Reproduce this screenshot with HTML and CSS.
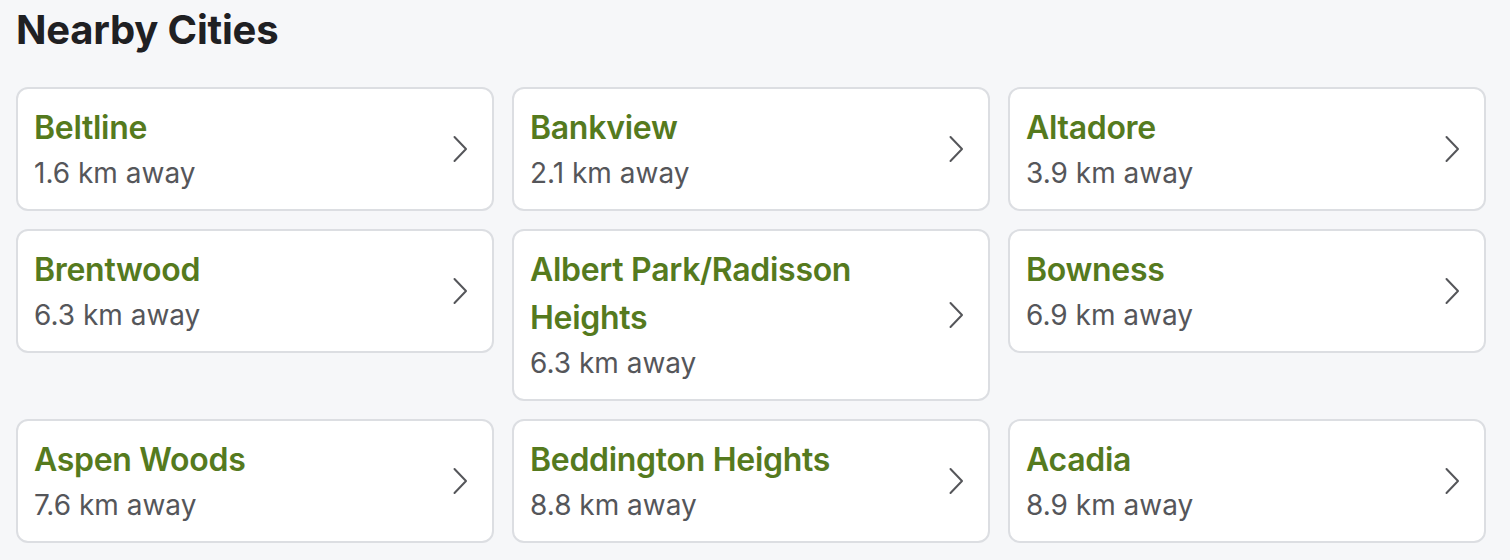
FILE: index.html
```html
<!DOCTYPE html>
<html lang="en">
<head>
<meta charset="utf-8">
<title>Nearby Cities</title>
<link rel="stylesheet" href="styles.css">
</head>
<body>
<section class="nearby">
  <h2 class="nearby-title">Nearby Cities</h2>
  <div class="city-grid">
    <a class="city-card" href="#"><div class="city-info"><div class="city-name">Beltline</div><div class="city-dist">1.6 km away</div></div><svg class="chev" viewBox="0 0 16 28" width="16" height="28"><path d="M2.5 2 L14 14 L2.5 26"/></svg></a>
    <a class="city-card" href="#"><div class="city-info"><div class="city-name">Bankview</div><div class="city-dist">2.1 km away</div></div><svg class="chev" viewBox="0 0 16 28" width="16" height="28"><path d="M2.5 2 L14 14 L2.5 26"/></svg></a>
    <a class="city-card" href="#"><div class="city-info"><div class="city-name">Altadore</div><div class="city-dist">3.9 km away</div></div><svg class="chev" viewBox="0 0 16 28" width="16" height="28"><path d="M2.5 2 L14 14 L2.5 26"/></svg></a>
    <a class="city-card" href="#"><div class="city-info"><div class="city-name">Brentwood</div><div class="city-dist">6.3 km away</div></div><svg class="chev" viewBox="0 0 16 28" width="16" height="28"><path d="M2.5 2 L14 14 L2.5 26"/></svg></a>
    <a class="city-card" href="#"><div class="city-info"><div class="city-name">Albert Park/Radisson Heights</div><div class="city-dist">6.3 km away</div></div><svg class="chev" viewBox="0 0 16 28" width="16" height="28"><path d="M2.5 2 L14 14 L2.5 26"/></svg></a>
    <a class="city-card" href="#"><div class="city-info"><div class="city-name">Bowness</div><div class="city-dist">6.9 km away</div></div><svg class="chev" viewBox="0 0 16 28" width="16" height="28"><path d="M2.5 2 L14 14 L2.5 26"/></svg></a>
    <a class="city-card" href="#"><div class="city-info"><div class="city-name">Aspen Woods</div><div class="city-dist">7.6 km away</div></div><svg class="chev" viewBox="0 0 16 28" width="16" height="28"><path d="M2.5 2 L14 14 L2.5 26"/></svg></a>
    <a class="city-card" href="#"><div class="city-info"><div class="city-name">Beddington Heights</div><div class="city-dist">8.8 km away</div></div><svg class="chev" viewBox="0 0 16 28" width="16" height="28"><path d="M2.5 2 L14 14 L2.5 26"/></svg></a>
    <a class="city-card" href="#"><div class="city-info"><div class="city-name">Acadia</div><div class="city-dist">8.9 km away</div></div><svg class="chev" viewBox="0 0 16 28" width="16" height="28"><path d="M2.5 2 L14 14 L2.5 26"/></svg></a>
  </div>
</section>
</body>
</html>
```

FILE: styles.css
```css
html, body {
  margin: 0;
  padding: 0;
  background: #f6f7f9;
}
body {
  font-family: Inter, "Noto Sans", "Liberation Sans", sans-serif;
}
.nearby {
  padding: 6px 16px 16px 16px;
}
.nearby-title {
  margin: 0 0 33px 0;
  font-size: 40px;
  line-height: 48px;
  font-weight: 700;
  color: #1f2023;
  letter-spacing: -0.2px;
}
.city-grid {
  display: grid;
  grid-template-columns: repeat(3, 478px);
  gap: 18px;
  align-items: start;
}
.city-card {
  display: flex;
  align-items: center;
  justify-content: space-between;
  gap: 16px;
  background: #ffffff;
  border: 2px solid #dcdee2;
  border-radius: 12px;
  padding: 15px 24px 15px 16px;
  text-decoration: none;
}
.city-info {
  display: flex;
  flex-direction: column;
  min-width: 0;
}
.city-name {
  font-size: 32px;
  line-height: 48px;
  font-weight: 600;
  letter-spacing: -0.3px;
  color: #557a1e;
}
.city-dist {
  font-size: 28px;
  line-height: 42px;
  font-weight: 400;
  color: #55565a;
}
.chev {
  flex: none;
}
.chev path {
  fill: none;
  stroke: #55565a;
  stroke-width: 2;
  stroke-linecap: round;
  stroke-linejoin: round;
}
```
